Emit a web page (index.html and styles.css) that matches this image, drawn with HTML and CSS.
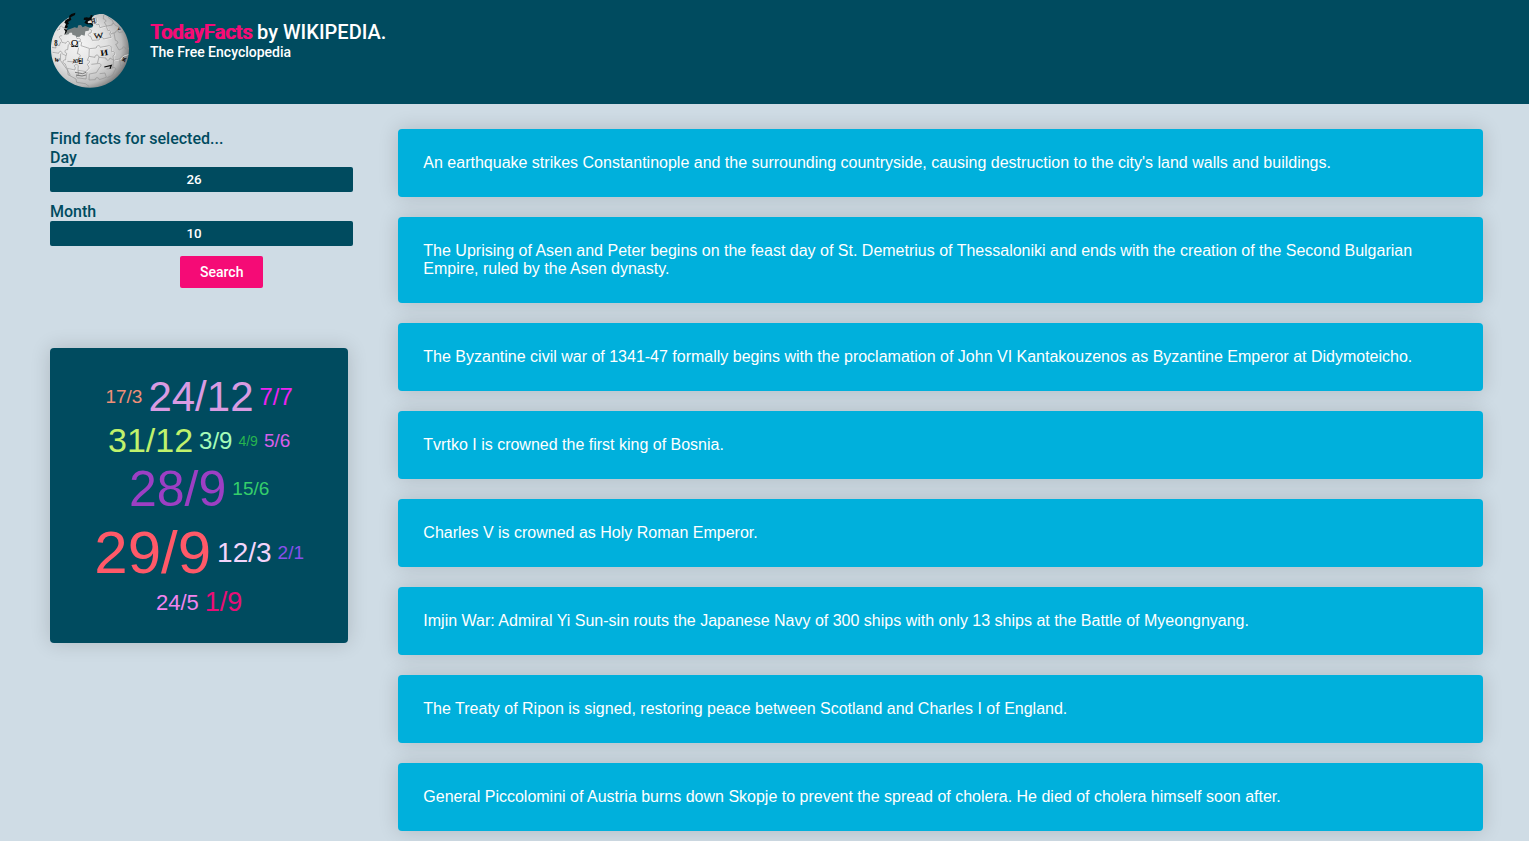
FILE: index.html
```
<!DOCTYPE html>
<html lang="en">
<head>
<meta charset="utf-8">
<title>TodayFacts</title>
<link rel="stylesheet" href="styles.css">
</head>
<body>
<header class="header">
  <svg class="logo" viewBox="30 36 240 240" aria-label="Wikipedia globe">
    <defs>
      <radialGradient id="ball" cx="0.36" cy="0.42" r="0.7">
        <stop offset="0" stop-color="#f4f4f4"/>
        <stop offset="0.5" stop-color="#e0e0e0"/>
        <stop offset="0.78" stop-color="#bababa"/>
        <stop offset="1" stop-color="#626262"/>
      </radialGradient>
      <clipPath id="edge"><circle cx="150" cy="147" r="117"/></clipPath>
    </defs>
    <path fill="#7d8383" d="M76 92L90 87L104 82L112 84L115 76L123 75L128 82L136 78L152 84L155 98L138 115L75 106Z"/>
    <path fill="url(#ball)" d="M105 44L96 47L90 50L91 57L85 60L79 66L83 71L79 76L82 85L78 90L80 99L75 105L86 103L89 98L96 98L97 104L107 107L109 111L119 110L124 104L134 107L136 94L146 92L148 84L157 82L160 75L154 70L145 71L141 66L146 61L154 60L155 53L163 46L178 42L190 42C237 61 267 101 267 147C267 212 215 263 150 263C85 263 33 212 33 147C33 98 61 59 105 44Z"/>
    <g fill="#050808">
      <path d="M106 38L94 42L88 47L87 55L77 60L73 68L78 72L75 79L72 88L76 94L73 105L79 99L82 90L79 86L84 80L81 75L87 71L84 66L94 59L92 52L105 45Z"/>
      <path d="M158 46L152 45L151 51L146 53L140 52L132 53L131 59L138 61L133 68L141 73L152 73L159 77L158 72L152 69L145 70L142 66L147 62L154 60L155 54Z"/>
    </g>
    <g clip-path="url(#edge)" fill="none">
      <g stroke="#f8f8f8" stroke-width="2.2" transform="translate(1.8 1.5)">
        <path d="M51 91L60 88C57 78 66 75 69 83L78 86M67 108C58 105 55 114 63 117L66 127L78 130C80 121 90 123 88 132L112 141L114 133C108 124 121 120 125 128L123 137L147 145M109 110L111 116C120 112 125 119 118 125M147 86L155 91L153 99C143 98 142 109 152 109L157 121L178 120C176 111 187 108 191 117L214 112L209 101C216 96 211 89 204 92L199 78L180 83L177 73C168 77 164 70 171 66L168 52"/>
        <path d="M38 157L56 160C58 151 67 153 66 161L78 167L77 180C68 178 66 190 76 192L81 205L105 210L106 202C98 196 109 190 115 197L114 211L138 215L148 204L142 193C151 188 150 179 142 181L147 169L148 146L169 144C168 136 180 134 181 142L208 137L216 142L215 155C227 152 227 165 219 168L221 181L239 177L250 166L264 162"/>
      </g>
      <g stroke="#929292" stroke-width="2">
        <path d="M51 91L60 88C57 78 66 75 69 83L78 86M67 108C58 105 55 114 63 117L66 127L78 130C80 121 90 123 88 132L112 141L114 133C108 124 121 120 125 128L123 137L147 145M109 110L111 116C120 112 125 119 118 125M147 86L155 91L153 99C143 98 142 109 152 109L157 121L178 120C176 111 187 108 191 117L214 112L209 101C216 96 211 89 204 92L199 78L180 83L177 73C168 77 164 70 171 66L168 52M191 45L190 57C199 57 200 67 193 67L200 78M204 52L217 61L221 71M201 78L217 75C214 68 224 68 226 76L238 81M211 102L227 97C226 91 235 90 237 98L250 95M222 99L226 121C236 122 235 133 227 133L237 150L248 145C247 138 256 139 257 147L267 145"/>
        <path d="M38 157L56 160C58 151 67 153 66 161L78 167L77 180C68 178 66 190 76 192L81 205L105 210L106 202C98 196 109 190 115 197L114 211L138 215L148 204L142 193C151 188 150 179 142 181L147 169L148 146L169 144C168 136 180 134 181 142L208 137L216 142L215 155C227 152 227 165 219 168L221 181L239 177L250 166L264 162M36 142L48 144C45 136 53 131 57 138L62 126M62 161L61 180L48 183M61 181L80 207L91 226M83 207L84 224L108 237L110 247L136 251L147 259M114 211L116 224C106 225 108 236 117 234L138 237L141 216M147 169L165 172C164 164 175 162 177 171L172 191L154 193M173 191C183 188 186 197 179 202L169 218L148 222L147 240L166 239C165 231 177 231 178 239L199 232L195 219L179 221M177 172L198 174C197 183 209 183 210 174L221 181L218 204L200 207M218 204C225 199 231 208 224 212L218 226L202 233M239 177L242 199M85 133L83 149C74 147 72 158 80 160L79 167M116 143L112 161C122 162 124 170 116 172L113 187L82 184"/>
        <path stroke="#666" stroke-width="2.5" d="M105 217L128 221L138 217M108 225L126 228L138 225"/>
      </g>
    </g>
    <g class="globe-letters">
      <text class="light" transform="translate(162 116) rotate(-6) scale(1.12 .85)" font-size="27">W</text>
      <text class="light" x="92" y="140" font-size="31">Ω</text>
      <text transform="translate(182 168) rotate(-8) scale(1.2 1)" font-size="25">И</text>
      <text transform="translate(98 188) rotate(5) scale(.9 1)" font-size="20">ִוא</text>
      <text x="113" y="188" font-size="18">된</text>
      <text class="light" transform="translate(154 72) rotate(-12)" font-size="22">Я</text>
      <text transform="translate(43 137) scale(.8 1)" font-size="25">8</text>
      <text transform="translate(42 184) rotate(12) scale(.9 1)" font-size="24">w</text>
      <path fill="none" stroke="#080808" stroke-width="3.5" d="M193 201L214 196L210 206"/>
      <text class="light" transform="translate(254 187) rotate(-70)" font-size="20">ж</text>
      <text class="light" transform="translate(231 88) rotate(45)" font-size="17">ν</text>
    </g>
  </svg>
  <div class="titles">
    <h1 class="title"><span class="brand">TodayFacts</span> by WIKIPEDIA.</h1>
    <p class="subtitle">The Free Encyclopedia</p>
  </div>
</header>
<main class="main">
  <aside class="sidebar">
    <form class="search">
      <p class="label">Find facts for selected...</p>
      <label class="label" for="day">Day</label>
      <input class="field" id="day" type="text" value="26">
      <label class="label" for="month">Month</label>
      <input class="field" id="month" type="text" value="10">
      <button class="button" type="button">Search</button>
    </form>
    <div class="cloud"><span class="tag t1">17/3</span><span class="tag t2">24/12</span><span class="tag t3">7/7</span><br><span class="tag t4">31/12</span><span class="tag t5">3/9</span><span class="tag t6">4/9</span><span class="tag t7">5/6</span><br><span class="tag t8">28/9</span><span class="tag t9">15/6</span><br><span class="tag t10">29/9</span><span class="tag t11">12/3</span><span class="tag t12">2/1</span><br><span class="tag t13">24/5</span><span class="tag t14">1/9</span></div>
  </aside>
  <section class="facts">
    <p class="fact">An earthquake strikes Constantinople and the surrounding countryside, causing destruction to the city's land walls and buildings.</p>
    <p class="fact">The Uprising of Asen and Peter begins on the feast day of St. Demetrius of Thessaloniki and ends with the creation of the Second Bulgarian Empire, ruled by the Asen dynasty.</p>
    <p class="fact">The Byzantine civil war of 1341-47 formally begins with the proclamation of John VI Kantakouzenos as Byzantine Emperor at Didymoteicho.</p>
    <p class="fact">Tvrtko I is crowned the first king of Bosnia.</p>
    <p class="fact">Charles V is crowned as Holy Roman Emperor.</p>
    <p class="fact">Imjin War: Admiral Yi Sun-sin routs the Japanese Navy of 300 ships with only 13 ships at the Battle of Myeongnyang.</p>
    <p class="fact">The Treaty of Ripon is signed, restoring peace between Scotland and Charles I of England.</p>
    <p class="fact">General Piccolomini of Austria burns down Skopje to prevent the spread of cholera. He died of cholera himself soon after.</p>
  </section>
</main>
</body>
</html>
```
FILE: styles.css
```
* { box-sizing: border-box; margin: 0; padding: 0; }
html, body { height: 100%; overflow: hidden; }
body {
  background: #cfdce5;
  font-family: "Liberation Sans", Arial, sans-serif;
  font-size: 16px;
}
.header {
  display: flex;
  gap: 20px;
  height: 104px;
  padding: 12px 50px;
  background: #004b5f;
  color: #fff;
  font-family: Roboto, sans-serif;
}
.logo { width: 80px; height: 80px; flex: none; }
.globe-letters {
  fill: #080808;
  font-family: "Liberation Serif", "Noto Sans CJK KR", serif;
  font-weight: bold;
}
.globe-letters .light { font-weight: normal; stroke: #080808; stroke-width: 0.5; }
.titles { padding-top: 8px; }
.title { font-size: 20px; font-weight: 500; line-height: 24px; }
.brand {
  color: #f50b76;
  letter-spacing: -0.06px;
  text-shadow: 1px 0 0 #f50b76;
}
.subtitle { font-size: 14px; font-weight: 500; line-height: 16px; }
.main { display: flex; gap: 45.35px; padding: 25px 46px 0 50px; }
.sidebar { width: 303px; flex: none; }
.search {
  display: flex;
  flex-direction: column;
  font-family: Roboto, sans-serif;
}
.label { color: #004b5f; font-size: 16px; font-weight: 500; line-height: 19px; }
.field {
  width: 100%;
  height: 25px;
  margin-bottom: 10px;
  border: 0;
  border-radius: 2px;
  background: #004b5f;
  color: #fff;
  font: 500 13.333px Roboto, sans-serif;
  text-align: center;
  padding-right: 15px;
}
.button {
  height: 32px;
  margin-left: 130px;
  padding: 0 20px;
  align-self: flex-start;
  border: 0;
  border-radius: 2px;
  background: #f50b76;
  color: #fff;
  font: 500 14px Roboto, sans-serif;
}
.cloud, .fact {
  border-radius: 4px;
  box-shadow: 0 0 20px rgba(0, 0, 0, 0.16);
}
.cloud {
  width: 298.3px;
  height: 295px;
  margin-top: 60px;
  padding: 25px;
  background: #004b5f;
  text-align: center;
}
.tag { display: inline-block; margin: 0 3px; vertical-align: middle; }
.t1 { color: #f08f78; font-size: 19px; }
.t2 { color: #d99be2; font-size: 42px; }
.t3 { color: #ec24f0; font-size: 24px; }
.t4 { color: #c0f26c; font-size: 34px; }
.t5 { color: #a4fbb9; font-size: 24px; }
.t6 { color: #27b54e; font-size: 14px; }
.t7 { color: #d75fe9; font-size: 19px; }
.t8 { color: #9c3fc4; font-size: 50px; }
.t9 { color: #35ce6b; font-size: 19px; }
.t10 { color: #ff5968; font-size: 60px; }
.t11 { color: #f3d5fb; font-size: 28px; }
.t12 { color: #8850eb; font-size: 19px; }
.t13 { color: #f284ee; font-size: 22px; }
.t14 { color: #e90d77; font-size: 27px; }
.facts { flex: 1; display: flex; flex-direction: column; gap: 20px; }
.fact {
  padding: 25px;
  background: #00b0dc;
  color: #fff;
  font-size: 16px;
  line-height: 18px;
}
```
